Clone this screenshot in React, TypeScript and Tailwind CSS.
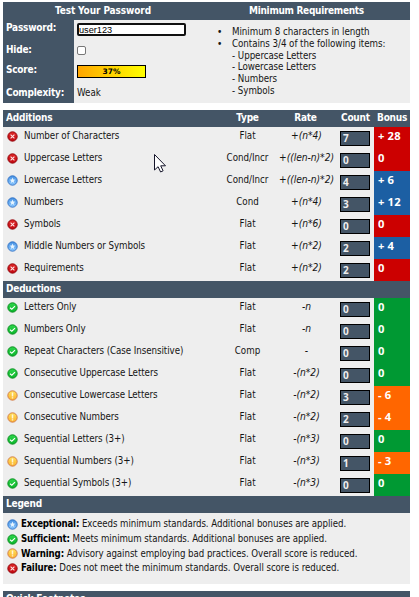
import { ReactNode } from "react";

type Status = "pass" | "fail" | "warn" | "star";

const gradients: Record<Status, [string, string, string]> = {
  pass: ["#2fd64c", "#0ab52a", "#078a1c"],
  fail: ["#e02a2a", "#c00810", "#8e0008"],
  warn: ["#ffe25c", "#fbb02c", "#d07848"],
  star: ["#8cc8ff", "#4590e2", "#2f6fc4"],
};

function StatusIcon({ status }: { status: Status }) {
  const [light, mid, edge] = gradients[status];
  const id = "g-" + status;
  return (
    <svg width="11" height="11" viewBox="0 0 11 11" className="block shrink-0">
      <defs>
        <linearGradient id={id} x1="0" y1="0" x2="0" y2="1">
          <stop offset="0" stopColor={status === "star" ? mid : light} />
          <stop offset="1" stopColor={status === "star" ? light : mid} />
        </linearGradient>
      </defs>
      <circle cx="5.5" cy="5.5" r="4.7" fill={`url(#${id})`} stroke={edge} strokeWidth="0.9" />
      {status === "pass" && <path d="M3 5.8 4.8 7.2 8 4.2" fill="none" stroke="#fff" strokeWidth="1.1" />}
      {status === "fail" && <path d="m3.6 3.6 3.8 3.8m0-3.8L3.6 7.4" stroke="#ffe4e4" strokeWidth="1.1" />}
      {status === "warn" && <path d="M5.5 2.4v4m0 .9v1.2" stroke="#fff5d8" strokeWidth="1.5" />}
      {status === "star" && <path d="m5.5 2.6.8 2 2.1.1-1.7 1.3.6 2-1.8-1.1L3.7 8l.6-2-1.7-1.3 2.1-.1z" fill="#e8f5ff" />}
    </svg>
  );
}

interface Item {
  status: Status;
  name: string;
  type: string;
  rate: string;
  count: string;
  bonus: string;
}

const additions: Item[] = [
  { status: "fail", name: "Number of Characters", type: "Flat", rate: "+(n*4)", count: "7", bonus: "+ 28" },
  { status: "fail", name: "Uppercase Letters", type: "Cond/Incr", rate: "+((len-n)*2)", count: "0", bonus: "0" },
  { status: "star", name: "Lowercase Letters", type: "Cond/Incr", rate: "+((len-n)*2)", count: "4", bonus: "+ 6" },
  { status: "star", name: "Numbers", type: "Cond", rate: "+(n*4)", count: "3", bonus: "+ 12" },
  { status: "fail", name: "Symbols", type: "Flat", rate: "+(n*6)", count: "0", bonus: "0" },
  { status: "star", name: "Middle Numbers or Symbols", type: "Flat", rate: "+(n*2)", count: "2", bonus: "+ 4" },
  { status: "fail", name: "Requirements", type: "Flat", rate: "+(n*2)", count: "2", bonus: "0" },
];

const deductions: Item[] = [
  { status: "pass", name: "Letters Only", type: "Flat", rate: "-n", count: "0", bonus: "0" },
  { status: "pass", name: "Numbers Only", type: "Flat", rate: "-n", count: "0", bonus: "0" },
  { status: "pass", name: "Repeat Characters (Case Insensitive)", type: "Comp", rate: "-", count: "0", bonus: "0" },
  { status: "pass", name: "Consecutive Uppercase Letters", type: "Flat", rate: "-(n*2)", count: "0", bonus: "0" },
  { status: "warn", name: "Consecutive Lowercase Letters", type: "Flat", rate: "-(n*2)", count: "3", bonus: "- 6" },
  { status: "warn", name: "Consecutive Numbers", type: "Flat", rate: "-(n*2)", count: "2", bonus: "- 4" },
  { status: "pass", name: "Sequential Letters (3+)", type: "Flat", rate: "-(n*3)", count: "0", bonus: "0" },
  { status: "warn", name: "Sequential Numbers (3+)", type: "Flat", rate: "-(n*3)", count: "1", bonus: "- 3" },
  { status: "pass", name: "Sequential Symbols (3+)", type: "Flat", rate: "-(n*3)", count: "0", bonus: "0" },
];

const bonusColor: Record<Status, string> = {
  pass: "bg-[#009933]",
  fail: "bg-[#cc0000]",
  warn: "bg-[#ff6600]",
  star: "bg-[#1c5fa3]",
};

function Row({ item }: { item: Item }) {
  return (
    <div className="grid h-[22px] grid-cols-[21px_197px_53px_63px_37px_36px]">
      <div className="pt-[4px] pl-[4px]"><StatusIcon status={item.status} /></div>
      <div className="pt-[2px] leading-[14px] tracking-[-0.06px]">{item.name}</div>
      <div className="pt-[2px] text-center leading-[14px]">{item.type}</div>
      <div className="pt-[2px] pl-[2px] text-center text-[10.2px] leading-[14px] tracking-[-0.05px] italic">{item.rate}</div>
      <div className="pt-[4px] pl-[3px]">
        <div className="h-[15px] w-[30px] border border-black bg-[#445566] pl-[2px] font-['Open_Sans',sans-serif] text-[10px] leading-[12px] font-bold text-[#eee]">{item.count}</div>
      </div>
      <div className={"pt-[2px] pl-[4px] font-['Open_Sans',sans-serif] text-[11.2px] leading-[14px] font-bold tracking-[0.15px] text-white " + bonusColor[item.status]}>{item.bonus}</div>
    </div>
  );
}

function Legend({ status, title, children }: { status: Status; title: string; children: ReactNode }) {
  return (
    <div className="flex h-[14.7px] items-center gap-[3px] pl-[4px] text-[9.6px] tracking-[-0.04px]">
      <StatusIcon status={status} />
      <p><b className="tracking-[-0.15px] text-black">{title}</b> {children}</p>
    </div>
  );
}

const bar = "bg-[#445566] font-bold text-white text-[10px] tracking-[-0.22px]";

export default function App() {
  return (
    <div className="relative h-[597px] w-[419px] overflow-hidden bg-white pt-[2px] pl-[3px] font-['DejaVu_Sans_Condensed','DejaVu_Sans',sans-serif] text-[9.7px] whitespace-nowrap text-[#151515]">
      <div className="w-[407px]">
        <div className={"grid h-[18px] grid-cols-[200px_207px] text-center leading-[17px] " + bar}>
          <div className="tracking-[-0.1px]">Test Your Password</div>
          <div className="tracking-[-0.3px]">Minimum Requirements</div>
        </div>
        <div className="grid h-[83px] grid-cols-[71px_137px_199px] bg-[#eee]">
          <div className={"pt-[1px] pl-[3px] leading-[14px] " + bar}>
            <div className="h-[22px]">Password:</div>
            <div className="h-[20px]">Hide:</div>
            <div className="h-[23px]">Score:</div>
            <div>Complexity:</div>
          </div>
          <div className="pt-[3px] pl-[3px]">
            <div className="h-[13px] w-[109px] rounded-[2px] border-2 border-[#101010] bg-white font-['Liberation_Sans',sans-serif] text-[9.2px] leading-[10px] text-black">user123</div>
            <div className="mt-[10px] h-[9px] w-[9px] rounded-[2px] border border-[#777] bg-white" />
            <div className="mt-[10px] h-[13px] w-[69px] border border-black bg-gradient-to-r from-[#ffa500] to-[#ffff00] text-center font-['DejaVu_Sans',sans-serif] text-[7.5px] leading-[11px] font-bold text-black">37%</div>
            <div className="mt-[8px] leading-[14px]">Weak</div>
          </div>
          <div className="grid grid-cols-[21px_1fr] pt-[6px] leading-[11.8px] tracking-[-0.05px]">
            <div className="pl-[6px] text-[10px]"><div>•</div><div>•</div></div>
            <div>
              <div>Minimum 8 characters in length</div>
              <div>Contains 3/4 of the following items:</div>
              <div>- Uppercase Letters</div>
              <div>- Lowercase Letters</div>
              <div>- Numbers</div>
              <div>- Symbols</div>
            </div>
          </div>
        </div>
        <div className={"mt-[7px] grid h-[17px] grid-cols-[218px_53px_63px_37px_36px] leading-[15px] " + bar}>
          <div className="pl-[3px]">Additions</div>
          <div className="text-center">Type</div>
          <div className="text-center">Rate</div>
          <div className="pl-[4px]">Count</div>
          <div className="pl-[3px]">Bonus</div>
        </div>
        <div className="bg-[#eee]">{additions.map((item) => <Row key={item.name} item={item} />)}</div>
        <div className={"h-[17px] pl-[3px] leading-[15px] " + bar}>Deductions</div>
        <div className="bg-[#eee]">{deductions.map((item) => <Row key={item.name} item={item} />)}</div>
        <div className={"h-[17px] pl-[3px] leading-[15px] " + bar}>Legend</div>
        <div className="h-[71px] bg-[#eee] pt-[4px]">
          <Legend status="star" title="Exceptional:">Exceeds minimum standards. Additional bonuses are applied.</Legend>
          <Legend status="pass" title="Sufficient:">Meets minimum standards. Additional bonuses are applied.</Legend>
          <Legend status="warn" title="Warning:">Advisory against employing bad practices. Overall score is reduced.</Legend>
          <Legend status="fail" title="Failure:">Does not meet the minimum standards. Overall score is reduced.</Legend>
        </div>
        <div className={"mt-[7px] h-[17px] pl-[3px] leading-[15px] " + bar}>Quick Footnotes</div>
      </div>
      <svg className="absolute top-[153px] left-[153px]" width="14" height="21" viewBox="0 0 14 21">
        <path d="M1.5 1.5v15.5l3.6-3.3 2.5 5.3 2.5-1.2-2.4-5h4.8z" fill="#fff" stroke="#15152a" strokeWidth="1" />
      </svg>
    </div>
  );
}
